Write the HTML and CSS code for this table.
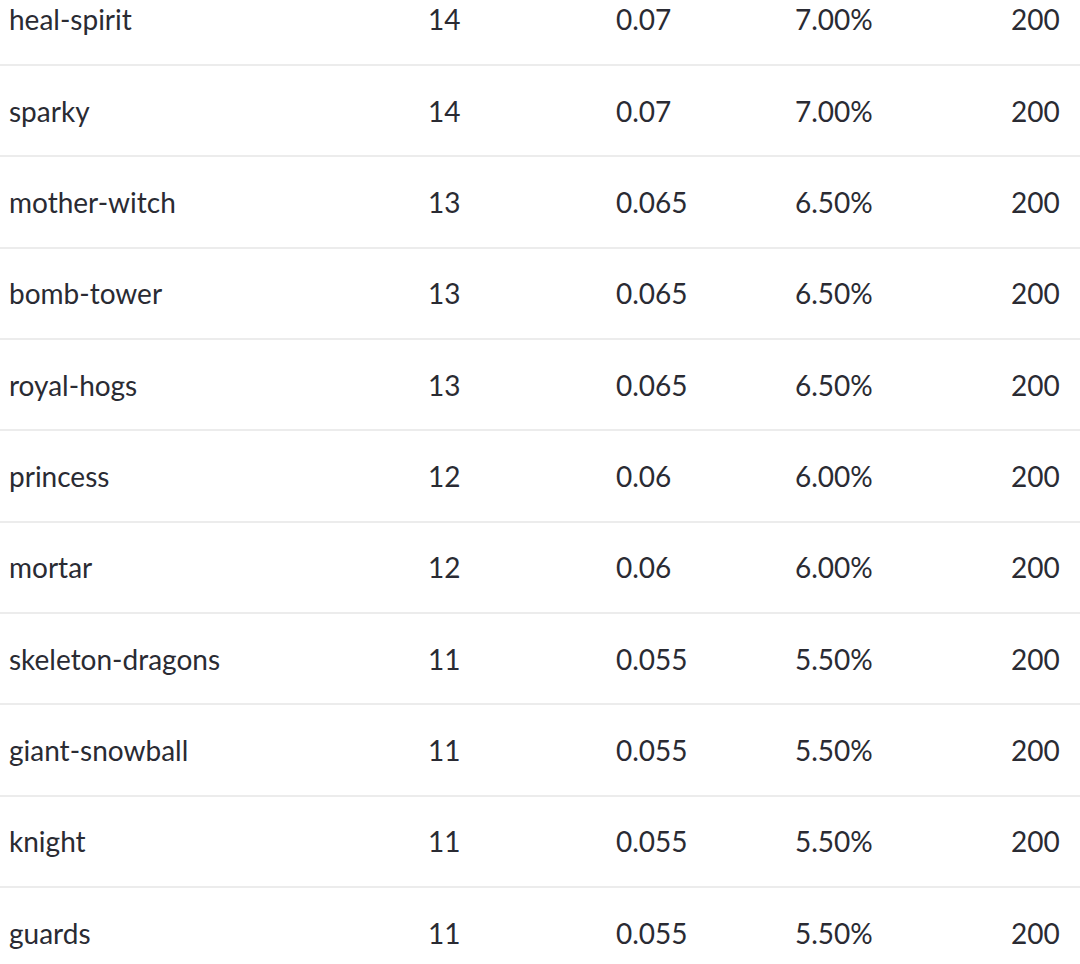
FILE: index.html
```html
<!DOCTYPE html>
<html>
<head>
<meta charset="utf-8">
<link rel="stylesheet" href="styles.css">
</head>
<body>
<div class="table">
  <div class="row"><span>heal-spirit</span><span>14</span><span>0.07</span><span>7.00%</span><span>200</span></div>
  <div class="row"><span>sparky</span><span>14</span><span>0.07</span><span>7.00%</span><span>200</span></div>
  <div class="row"><span>mother-witch</span><span>13</span><span>0.065</span><span>6.50%</span><span>200</span></div>
  <div class="row"><span>bomb-tower</span><span>13</span><span>0.065</span><span>6.50%</span><span>200</span></div>
  <div class="row"><span>royal-hogs</span><span>13</span><span>0.065</span><span>6.50%</span><span>200</span></div>
  <div class="row"><span>princess</span><span>12</span><span>0.06</span><span>6.00%</span><span>200</span></div>
  <div class="row"><span>mortar</span><span>12</span><span>0.06</span><span>6.00%</span><span>200</span></div>
  <div class="row"><span>skeleton-dragons</span><span>11</span><span>0.055</span><span>5.50%</span><span>200</span></div>
  <div class="row"><span>giant-snowball</span><span>11</span><span>0.055</span><span>5.50%</span><span>200</span></div>
  <div class="row"><span>knight</span><span>11</span><span>0.055</span><span>5.50%</span><span>200</span></div>
  <div class="row"><span>guards</span><span>11</span><span>0.055</span><span>5.50%</span><span>200</span></div>
</div>
</body>
</html>
```
FILE: styles.css
```css
html, body {
  margin: 0;
  padding: 0;
  background: #ffffff;
  overflow: hidden;
}
body {
  font-family: "Lato", "Liberation Sans", sans-serif;
  font-size: 28px;
  color: #2a2b33;
}
.table {
  margin-top: -25.33px;
}
.row {
  display: grid;
  grid-template-columns: 419px 188px 179px 216px 1fr;
  align-items: center;
  height: 89.33px;
  padding-left: 9px;
  border-bottom: 2px solid #ececec;
  box-sizing: content-box;
}
.row span {
  white-space: nowrap;
}
```
